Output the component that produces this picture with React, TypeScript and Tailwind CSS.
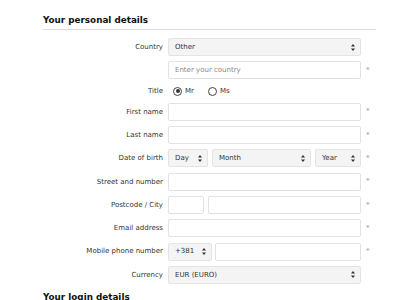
import React from 'react';

function Arrows() {
  return (
    <svg width="4" height="7" viewBox="0 0 4 7" className="shrink-0">
      <path d="M2 0 L4 2.6 L0 2.6 Z" fill="#333" />
      <path d="M2 7 L4 4.4 L0 4.4 Z" fill="#333" />
    </svg>
  );
}

function Select({ value, className = '' }: { value: string; className?: string }) {
  return (
    <div
      className={`h-[18px] flex items-center justify-between pl-[6px] pr-[5px] bg-[#f4f4f4] border border-[#e4e4e4] rounded-[2px] text-[7px] text-[#333] ${className}`}
    >
      <span>{value}</span>
      <Arrows />
    </div>
  );
}

function Input({ placeholder, className = '' }: { placeholder?: string; className?: string }) {
  return (
    <div
      className={`h-[18px] flex items-center px-[6px] bg-white border border-[#e2e2e2] rounded-[2px] text-[7px] text-[#888] ${className}`}
    >
      {placeholder}
    </div>
  );
}

function Label({ children }: { children: React.ReactNode }) {
  return <div className="flex items-center justify-end text-[7px] text-[#333]">{children}</div>;
}

function Req() {
  return <div className="flex items-center text-[7px] text-[#999] leading-none">*</div>;
}

function Radio({ checked, label }: { checked?: boolean; label: string }) {
  return (
    <div className="flex items-center gap-[3px]">
      <span className="w-[9px] h-[9px] rounded-full border-[1.2px] border-[#444] flex items-center justify-center">
        {checked && <span className="w-[4px] h-[4px] rounded-full bg-[#333]" />}
      </span>
      <span className="text-[7px] text-[#333]">{label}</span>
    </div>
  );
}

export default function App() {
  return (
    <div className="w-[400px] h-[300px] overflow-hidden bg-white" style={{ fontFamily: '"DejaVu Sans", Verdana, sans-serif' }}>
      <div className="ml-[43px] w-[333px] pt-[15px]">
        <h2 className="text-[8.8px] leading-[11px] font-bold text-[#111] pb-[3px] border-b border-[#dcdcdc]">
          Your personal details
        </h2>

        <div className="mt-[8px] grid grid-cols-[120px_193px_10px] gap-x-[5px] gap-y-[5.3px]">
          <Label>Country</Label>
          <Select value="Other" />
          <div />

          <div />
          <Input placeholder="Enter your country" />
          <Req />

          <div className="h-[13px] flex items-center justify-end text-[7px] text-[#333]">Title</div>
          <div className="h-[13px] flex items-center gap-[14px] pl-[5px]">
            <Radio checked label="Mr" />
            <Radio label="Ms" />
          </div>
          <div />

          <Label>First name</Label>
          <Input />
          <Req />

          <Label>Last name</Label>
          <Input />
          <Req />

          <Label>Date of birth</Label>
          <div className="flex gap-[4px]">
            <Select value="Day" className="w-[40px]" />
            <Select value="Month" className="w-[99px]" />
            <Select value="Year" className="flex-1" />
          </div>
          <Req />

          <Label>Street and number</Label>
          <Input />
          <Req />

          <Label>Postcode / City</Label>
          <div className="flex gap-[4px]">
            <Input className="w-[36px]" />
            <Input className="flex-1" />
          </div>
          <Req />

          <Label>Email address</Label>
          <Input />
          <Req />

          <Label>Mobile phone number</Label>
          <div className="flex gap-[3px]">
            <Select value="+381" className="w-[44px]" />
            <Input className="flex-1" />
          </div>
          <Req />

          <Label>Currency</Label>
          <Select value="EUR (EURO)" />
          <div />
        </div>

        <h2 className="mt-[8px] text-[8.8px] leading-[11px] font-bold text-[#111] pb-[3px] border-b border-[#dcdcdc]">
          Your login details
        </h2>
      </div>
    </div>
  );
}
